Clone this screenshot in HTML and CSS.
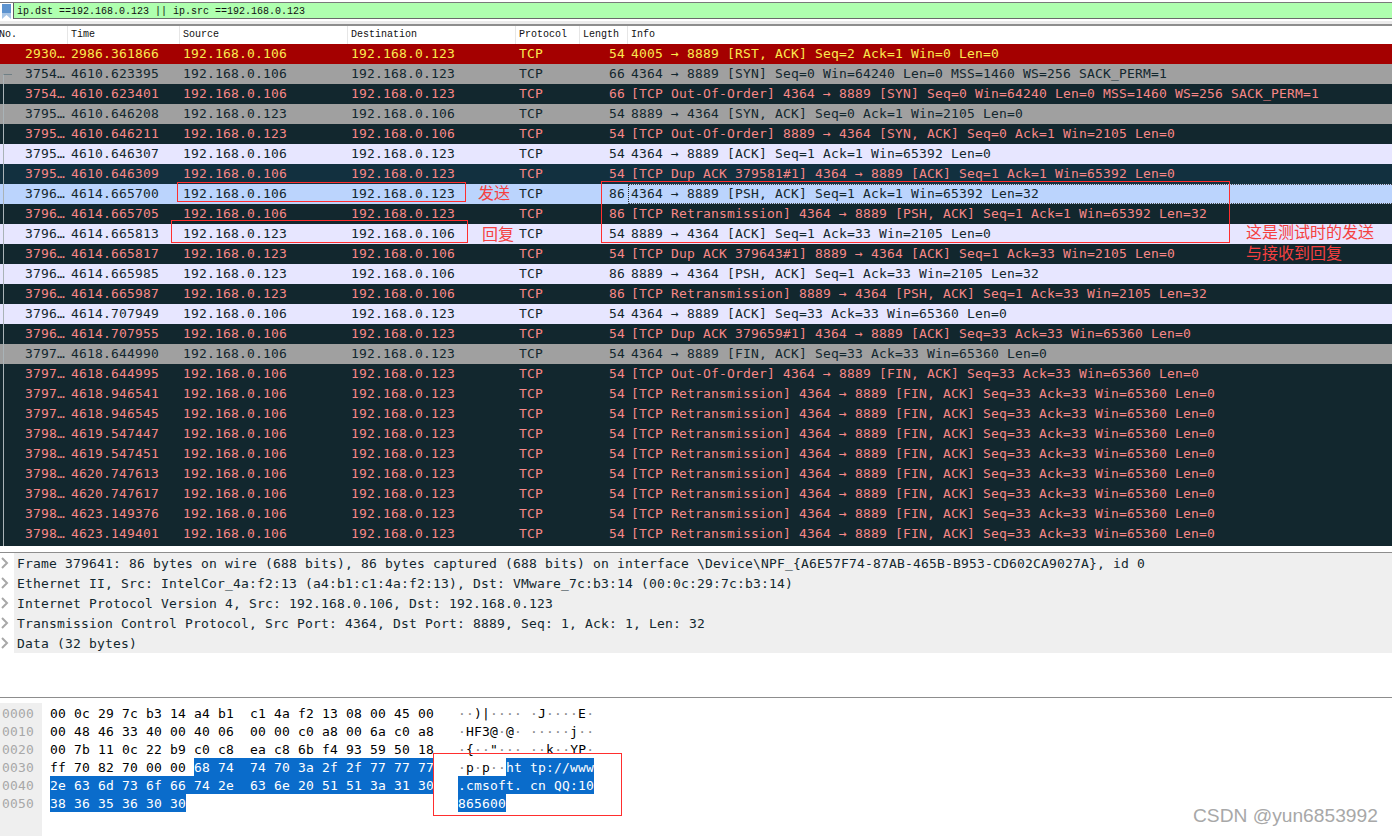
FILE: index.html
```html
<!DOCTYPE html>
<html lang="zh-CN">
<head>
<meta charset="utf-8">
<title>Wireshark capture</title>
<link rel="stylesheet" href="styles.css">
</head>
<body>
<div class="app">
  <div class="filter">
    <svg class="bookmark" width="13" height="16" viewBox="0 0 13 16"><rect x="2" y="1" width="9" height="15" fill="#5d93cf"/><rect x="2" y="10" width="9" height="6" fill="#a9c6e6"/><path d="M2 16 L6.500 12 L11 16 Z" fill="#fff"/></svg>
    <div class="filter-input">ip.dst ==192.168.0.123 || ip.src ==192.168.0.123</div>
  </div>
  <div class="head">
    <span class="h-no">No.</span><span>Time</span><span>Source</span><span>Destination</span><span>Protocol</span><span>Length</span><span class="h-info">Info</span>
  </div>
  <div class="list">
    <div class="row red"><span class="no">2930…</span><span>2986.361866</span><span>192.168.0.106</span><span>192.168.0.123</span><span>TCP</span><span class="len">54</span><span class="info">4005 → 8889 [RST, ACK] Seq=2 Ack=1 Win=0 Len=0</span></div>
    <div class="row gray"><span class="no">3754…</span><span>4610.623395</span><span>192.168.0.106</span><span>192.168.0.123</span><span>TCP</span><span class="len">66</span><span class="info">4364 → 8889 [SYN] Seq=0 Win=64240 Len=0 MSS=1460 WS=256 SACK_PERM=1</span></div>
    <div class="row dark"><span class="no">3754…</span><span>4610.623401</span><span>192.168.0.106</span><span>192.168.0.123</span><span>TCP</span><span class="len">66</span><span class="info">[TCP Out-Of-Order] 4364 → 8889 [SYN] Seq=0 Win=64240 Len=0 MSS=1460 WS=256 SACK_PERM=1</span></div>
    <div class="row gray"><span class="no">3795…</span><span>4610.646208</span><span>192.168.0.123</span><span>192.168.0.106</span><span>TCP</span><span class="len">54</span><span class="info">8889 → 4364 [SYN, ACK] Seq=0 Ack=1 Win=2105 Len=0</span></div>
    <div class="row dark"><span class="no">3795…</span><span>4610.646211</span><span>192.168.0.123</span><span>192.168.0.106</span><span>TCP</span><span class="len">54</span><span class="info">[TCP Out-Of-Order] 8889 → 4364 [SYN, ACK] Seq=0 Ack=1 Win=2105 Len=0</span></div>
    <div class="row light"><span class="no">3795…</span><span>4610.646307</span><span>192.168.0.106</span><span>192.168.0.123</span><span>TCP</span><span class="len">54</span><span class="info">4364 → 8889 [ACK] Seq=1 Ack=1 Win=65392 Len=0</span></div>
    <div class="row navy"><span class="no">3795…</span><span>4610.646309</span><span>192.168.0.106</span><span>192.168.0.123</span><span>TCP</span><span class="len">54</span><span class="info">[TCP Dup ACK 379581#1] 4364 → 8889 [ACK] Seq=1 Ack=1 Win=65392 Len=0</span></div>
    <div class="row sel"><span class="no">3796…</span><span>4614.665700</span><span>192.168.0.106</span><span>192.168.0.123</span><span>TCP</span><span class="len">86</span><span class="info">4364 → 8889 [PSH, ACK] Seq=1 Ack=1 Win=65392 Len=32</span></div>
    <div class="row dark"><span class="no">3796…</span><span>4614.665705</span><span>192.168.0.106</span><span>192.168.0.123</span><span>TCP</span><span class="len">86</span><span class="info">[TCP Retransmission] 4364 → 8889 [PSH, ACK] Seq=1 Ack=1 Win=65392 Len=32</span></div>
    <div class="row light"><span class="no">3796…</span><span>4614.665813</span><span>192.168.0.123</span><span>192.168.0.106</span><span>TCP</span><span class="len">54</span><span class="info">8889 → 4364 [ACK] Seq=1 Ack=33 Win=2105 Len=0</span></div>
    <div class="row dark"><span class="no">3796…</span><span>4614.665817</span><span>192.168.0.123</span><span>192.168.0.106</span><span>TCP</span><span class="len">54</span><span class="info">[TCP Dup ACK 379643#1] 8889 → 4364 [ACK] Seq=1 Ack=33 Win=2105 Len=0</span></div>
    <div class="row light"><span class="no">3796…</span><span>4614.665985</span><span>192.168.0.123</span><span>192.168.0.106</span><span>TCP</span><span class="len">86</span><span class="info">8889 → 4364 [PSH, ACK] Seq=1 Ack=33 Win=2105 Len=32</span></div>
    <div class="row dark"><span class="no">3796…</span><span>4614.665987</span><span>192.168.0.123</span><span>192.168.0.106</span><span>TCP</span><span class="len">86</span><span class="info">[TCP Retransmission] 8889 → 4364 [PSH, ACK] Seq=1 Ack=33 Win=2105 Len=32</span></div>
    <div class="row light"><span class="no">3796…</span><span>4614.707949</span><span>192.168.0.106</span><span>192.168.0.123</span><span>TCP</span><span class="len">54</span><span class="info">4364 → 8889 [ACK] Seq=33 Ack=33 Win=65360 Len=0</span></div>
    <div class="row dark"><span class="no">3796…</span><span>4614.707955</span><span>192.168.0.106</span><span>192.168.0.123</span><span>TCP</span><span class="len">54</span><span class="info">[TCP Dup ACK 379659#1] 4364 → 8889 [ACK] Seq=33 Ack=33 Win=65360 Len=0</span></div>
    <div class="row gray"><span class="no">3797…</span><span>4618.644990</span><span>192.168.0.106</span><span>192.168.0.123</span><span>TCP</span><span class="len">54</span><span class="info">4364 → 8889 [FIN, ACK] Seq=33 Ack=33 Win=65360 Len=0</span></div>
    <div class="row dark"><span class="no">3797…</span><span>4618.644995</span><span>192.168.0.106</span><span>192.168.0.123</span><span>TCP</span><span class="len">54</span><span class="info">[TCP Out-Of-Order] 4364 → 8889 [FIN, ACK] Seq=33 Ack=33 Win=65360 Len=0</span></div>
    <div class="row dark"><span class="no">3797…</span><span>4618.946541</span><span>192.168.0.106</span><span>192.168.0.123</span><span>TCP</span><span class="len">54</span><span class="info">[TCP Retransmission] 4364 → 8889 [FIN, ACK] Seq=33 Ack=33 Win=65360 Len=0</span></div>
    <div class="row dark"><span class="no">3797…</span><span>4618.946545</span><span>192.168.0.106</span><span>192.168.0.123</span><span>TCP</span><span class="len">54</span><span class="info">[TCP Retransmission] 4364 → 8889 [FIN, ACK] Seq=33 Ack=33 Win=65360 Len=0</span></div>
    <div class="row dark"><span class="no">3798…</span><span>4619.547447</span><span>192.168.0.106</span><span>192.168.0.123</span><span>TCP</span><span class="len">54</span><span class="info">[TCP Retransmission] 4364 → 8889 [FIN, ACK] Seq=33 Ack=33 Win=65360 Len=0</span></div>
    <div class="row dark"><span class="no">3798…</span><span>4619.547451</span><span>192.168.0.106</span><span>192.168.0.123</span><span>TCP</span><span class="len">54</span><span class="info">[TCP Retransmission] 4364 → 8889 [FIN, ACK] Seq=33 Ack=33 Win=65360 Len=0</span></div>
    <div class="row dark"><span class="no">3798…</span><span>4620.747613</span><span>192.168.0.106</span><span>192.168.0.123</span><span>TCP</span><span class="len">54</span><span class="info">[TCP Retransmission] 4364 → 8889 [FIN, ACK] Seq=33 Ack=33 Win=65360 Len=0</span></div>
    <div class="row dark"><span class="no">3798…</span><span>4620.747617</span><span>192.168.0.106</span><span>192.168.0.123</span><span>TCP</span><span class="len">54</span><span class="info">[TCP Retransmission] 4364 → 8889 [FIN, ACK] Seq=33 Ack=33 Win=65360 Len=0</span></div>
    <div class="row dark"><span class="no">3798…</span><span>4623.149376</span><span>192.168.0.106</span><span>192.168.0.123</span><span>TCP</span><span class="len">54</span><span class="info">[TCP Retransmission] 4364 → 8889 [FIN, ACK] Seq=33 Ack=33 Win=65360 Len=0</span></div>
    <div class="row dark"><span class="no">3798…</span><span>4623.149401</span><span>192.168.0.106</span><span>192.168.0.123</span><span>TCP</span><span class="len">54</span><span class="info">[TCP Retransmission] 4364 → 8889 [FIN, ACK] Seq=33 Ack=33 Win=65360 Len=0</span></div>
    <div class="list-end"></div>
    <div class="rel-line"></div>
  </div>
  <div class="details">
    <div class="d-row"><svg class="chev" width="14" height="20" viewBox="0 0 14 20"><path d="M2 5 L7 10 L2 15" fill="none" stroke="#a8a8a8" stroke-width="2"/></svg><span class="d-text">Frame 379641: 86 bytes on wire (688 bits), 86 bytes captured (688 bits) on interface \Device\NPF_{A6E57F74-87AB-465B-B953-CD602CA9027A}, id 0</span></div>
    <div class="d-row"><svg class="chev" width="14" height="20" viewBox="0 0 14 20"><path d="M2 5 L7 10 L2 15" fill="none" stroke="#a8a8a8" stroke-width="2"/></svg><span class="d-text">Ethernet II, Src: IntelCor_4a:f2:13 (a4:b1:c1:4a:f2:13), Dst: VMware_7c:b3:14 (00:0c:29:7c:b3:14)</span></div>
    <div class="d-row"><svg class="chev" width="14" height="20" viewBox="0 0 14 20"><path d="M2 5 L7 10 L2 15" fill="none" stroke="#a8a8a8" stroke-width="2"/></svg><span class="d-text">Internet Protocol Version 4, Src: 192.168.0.106, Dst: 192.168.0.123</span></div>
    <div class="d-row"><svg class="chev" width="14" height="20" viewBox="0 0 14 20"><path d="M2 5 L7 10 L2 15" fill="none" stroke="#a8a8a8" stroke-width="2"/></svg><span class="d-text">Transmission Control Protocol, Src Port: 4364, Dst Port: 8889, Seq: 1, Ack: 1, Len: 32</span></div>
    <div class="d-row"><svg class="chev" width="14" height="20" viewBox="0 0 14 20"><path d="M2 5 L7 10 L2 15" fill="none" stroke="#a8a8a8" stroke-width="2"/></svg><span class="d-text">Data (32 bytes)</span></div>
  </div>
  <div class="hex">
    <div class="h-row"><span class="off">0000</span><span class="bytes">00 0c 29 7c b3 14 a4 b1  c1 4a f2 13 08 00 45 00</span><span class="ascii"><i>··</i>)|<i>····</i> <i>·</i>J<i>····</i>E<i>·</i></span></div>
    <div class="h-row"><span class="off">0010</span><span class="bytes">00 48 46 33 40 00 40 06  00 00 c0 a8 00 6a c0 a8</span><span class="ascii"><i>·</i>HF3@<i>·</i>@<i>·</i> <i>·····</i>j<i>··</i></span></div>
    <div class="h-row"><span class="off">0020</span><span class="bytes">00 7b 11 0c 22 b9 c0 c8  ea c8 6b f4 93 59 50 18</span><span class="ascii"><i>·</i>{<i>··</i>"<i>···</i> <i>··</i>k<i>··</i>YP<i>·</i></span></div>
    <div class="h-row"><span class="off">0030</span><span class="bytes">ff 70 82 70 00 00 <b>68 74  74 70 3a 2f 2f 77 77 77</b></span><span class="ascii"><i>·</i>p<i>·</i>p<i>··</i><b>ht tp://www</b></span></div>
    <div class="h-row"><span class="off">0040</span><span class="bytes"><b>2e 63 6d 73 6f 66 74 2e  63 6e 20 51 51 3a 31 30</b></span><span class="ascii"><b>.cmsoft. cn QQ:10</b></span></div>
    <div class="h-row"><span class="off">0050</span><span class="bytes"><b>38 36 35 36 30 30</b></span><span class="ascii"><b>865600</b></span></div>
  </div>
</div>
<div class="box box-send"></div>
<div class="box box-reply"></div>
<div class="box box-info"></div>
<div class="box box-ascii"></div>
<div class="note note-send">发送</div>
<div class="note note-reply">回复</div>
<div class="note note-test">这是测试时的发送<br>与接收到回复</div>
<div class="watermark">CSDN @yun6853992</div>
</body>
</html>
```
FILE: styles.css
```css
* { box-sizing: border-box; }
html, body { margin: 0; padding: 0; background: #fff; }
body { width: 1392px; height: 836px; overflow: hidden; position: relative; }
.app {
  display: flex;
  flex-direction: column;
  height: 836px;
  font-family: "DejaVu Sans Mono", "Liberation Mono", monospace;
  font-size: 13px;
  letter-spacing: 0.174px;
  color: #12272e;
}

/* display filter */
.filter {
  display: flex;
  height: 22px;
  margin-top: 2px;
  border-top: 1px solid #7a7a7a;
  border-bottom: 3px solid #ececec;
  position: relative;
}
.bookmark { flex: none; width: 13px; height: 16px; }
.filter-input {
  flex: 1;
  height: 16px;
  padding-left: 3px;
  background: #afffaf;
  border-left: 1px solid #5c5c5c;
  border-bottom: 1px solid #6a6a6a;
  font-family: "Liberation Mono", monospace;
  font-size: 10px;
  letter-spacing: 0;
  line-height: 17px;
  color: #111;
  white-space: pre;
}

/* packet list header */
.head {
  display: grid;
  grid-template-columns: 68px 112px 168px 168px 64px 48px 1fr;
  height: 20px;
  border-top: 2px solid #8d8d8d;
  background: #fff;
  font-family: "Liberation Mono", monospace;
  font-size: 10px;
  letter-spacing: 0;
  line-height: 18px;
  color: #111;
}
.head span { padding-left: 3px; border-right: 1px solid #e6e6e6; }
.head .h-no { padding-left: 0; text-indent: -1px; }
.head .h-info { border-right: 0; }

/* packet list */
.list { position: relative; }
.row {
  display: grid;
  grid-template-columns: 68px 112px 168px 168px 64px 48px 1fr;
  height: 20px;
  line-height: 19px;
  white-space: pre;
}
.row span { padding-left: 3px; overflow: hidden; }
.row .no, .row .len { padding-left: 0; padding-right: 3px; text-align: right; }
.red { background: #a40000; color: #fce94f; }
.gray { background: #a0a0a0; color: #12272e; }
.dark { background: #12272e; color: #f78787; }
.navy { background: #12303f; color: #f78787; }
.light { background: #e7e6ff; color: #12272e; }
.sel { background: #bbd4fd; color: #12272e; }
.sel .info {
  border-top: 1px dotted #444;
  border-bottom: 1px dotted #444;
  border-left: 1px dotted #222;
  padding-left: 2px;
  line-height: 17px;
}
.list-end { height: 2px; background: #12272e; }
.rel-line {
  position: absolute;
  left: 3px;
  top: 30px;
  width: 9px;
  height: 472px;
  border-top: 1px solid #6f7f85;
  border-left: 1px solid #a9b3b7;
}

/* packet details */
.details {
  margin-top: 6px;
  border-top: 1px solid #8d8d8d;
}
.d-row { display: flex; height: 20px; line-height: 21px; }
.chev { flex: none; background: #fff; }
.d-text {
  flex: 1;
  padding-left: 3px;
  background: #efefef;
  white-space: pre;
}

/* packet bytes */
.hex {
  flex: 1;
  margin-top: 44px;
  padding-top: 6px;
  border-top: 1px solid #8d8d8d;
  background: linear-gradient(#fff, #fff) 0 0 / 100% 5px no-repeat, linear-gradient(90deg, #efefef 42px, #fff 42px);
  color: #000;
}
.h-row { display: flex; height: 18px; line-height: 20px; white-space: pre; }
.off { flex: none; width: 42px; padding-left: 2px; color: #a8a8a8; }
.bytes { flex: none; width: 384px; margin-left: 8px; }
.ascii { flex: none; margin-left: 24px; }
.ascii i { font-style: normal; color: #8a8a8a; }
.h-row b { font-weight: normal; background: #0a6ccb; color: #fff; display: inline-block; height: 18px; }

/* hand-drawn annotations laid over the screenshot */
.box { position: absolute; border: 1px solid #ff2e2e; }
.box-send { left: 177px; top: 182px; width: 289px; height: 20px; }
.box-reply { left: 171px; top: 220px; width: 297px; height: 23px; }
.box-info { left: 601px; top: 181px; width: 629px; height: 62px; }
.box-ascii { left: 433px; top: 753px; width: 189px; height: 63px; }
.note {
  position: absolute;
  font-family: "Noto Sans CJK SC", sans-serif;
  font-size: 16px;
  color: #f54040;
  white-space: nowrap;
}
.note-send { left: 478px; top: 180px; line-height: 24px; }
.note-reply { left: 482px; top: 221px; line-height: 24px; }
.note-test { left: 1246px; top: 221px; line-height: 21px; }
.watermark {
  position: absolute;
  left: 1193px;
  top: 804px;
  font-family: "Liberation Sans", sans-serif;
  font-size: 19.2px;
  line-height: 24px;
  color: #a8a8a8;
  white-space: nowrap;
}
```
